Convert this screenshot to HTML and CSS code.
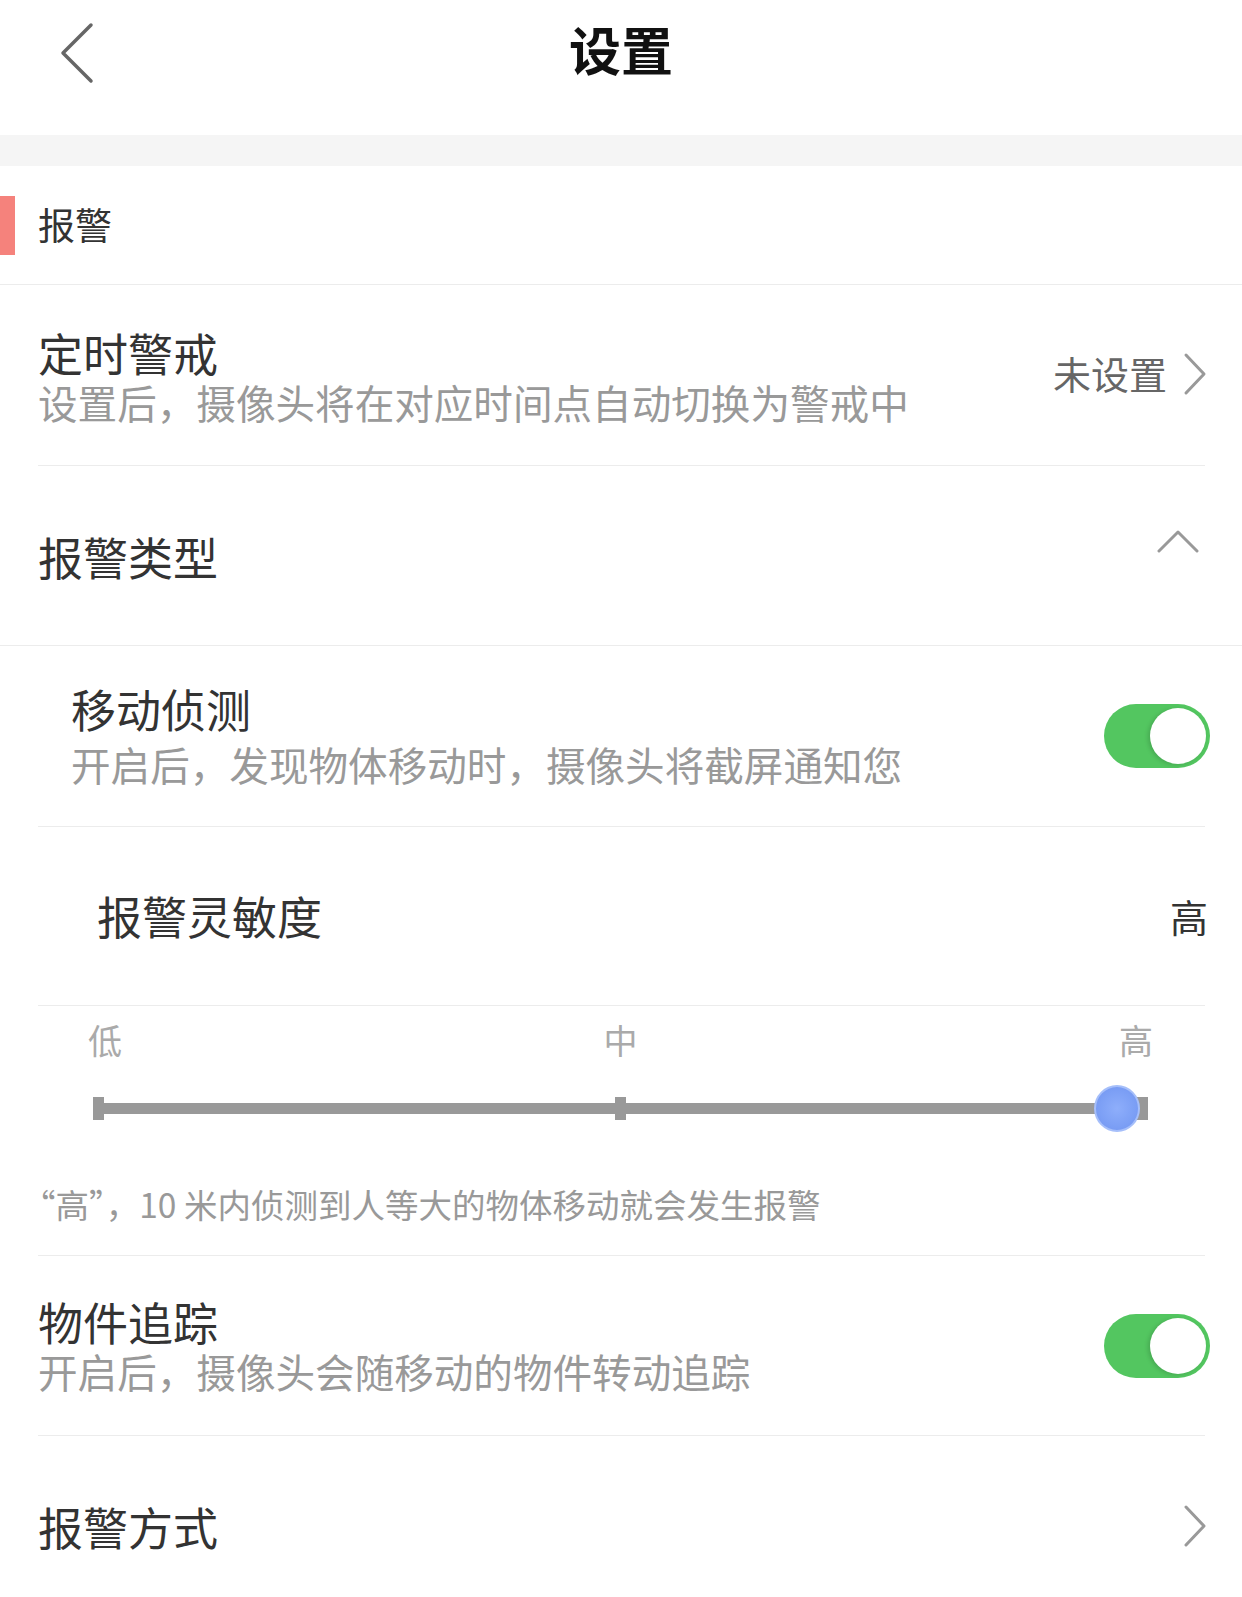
FILE: index.html
```html
<!DOCTYPE html>
<html lang="zh-CN">
<head>
<meta charset="utf-8">
<title>设置</title>
<link rel="stylesheet" href="styles.css">
</head>
<body>
<div class="page">
  <header class="header">
    <div class="header-row">
      <span class="back">
        <svg width="36" height="62" viewBox="0 0 36 62"><polyline points="32,3 4,31 32,59" fill="none" stroke="#666" stroke-width="3.5" stroke-linecap="round" stroke-linejoin="round"/></svg>
      </span>
      <h1 class="title">设置</h1>
      <span class="spacer"></span>
    </div>
  </header>
  <div class="band"></div>

  <div class="section-head">
    <span class="mark"></span>
    <span class="section-title">报警</span>
  </div>

  <div class="row-wrap">
    <div class="row row-a">
      <div class="texts">
        <div class="row-title">定时警戒</div>
        <div class="row-sub">设置后，摄像头将在对应时间点自动切换为警戒中</div>
      </div>
      <div class="value">未设置
        <svg class="chev" width="24" height="44" viewBox="0 0 24 44"><polyline points="3,3 21,22 3,41" fill="none" stroke="#999" stroke-width="3" stroke-linecap="round" stroke-linejoin="round"/></svg>
      </div>
    </div>
  </div>

  <div class="row-full">
    <div class="row row-b">
      <div class="row-title">报警类型</div>
      <svg class="up" width="42" height="24" viewBox="0 0 42 24"><polyline points="2,22 21,3 40,22" fill="none" stroke="#999" stroke-width="3" stroke-linecap="round" stroke-linejoin="round"/></svg>
    </div>
  </div>

  <div class="row-wrap">
    <div class="row row-c">
      <div class="texts indent1">
        <div class="row-title">移动侦测</div>
        <div class="row-sub sub-wide">开启后，发现物体移动时，摄像头将截屏通知您</div>
      </div>
      <span class="toggle"><span class="knob"></span></span>
    </div>
  </div>

  <div class="row-wrap">
    <div class="row row-d">
      <div class="row-title indent2">报警灵敏度</div>
      <div class="level">高</div>
    </div>
  </div>

  <div class="row-wrap">
    <div class="slider-block">
      <div class="labels">
        <span>低</span><span>中</span><span>高</span>
      </div>
      <div class="track">
        <span class="tick tick-l"></span>
        <span class="tick tick-m"></span>
        <span class="tick tick-r"></span>
        <span class="thumb"></span>
      </div>
      <div class="desc">“高”，10 米内侦测到人等大的物体移动就会发生报警</div>
    </div>
  </div>

  <div class="row-wrap">
    <div class="row row-e">
      <div class="texts">
        <div class="row-title">物件追踪</div>
        <div class="row-sub">开启后，摄像头会随移动的物件转动追踪</div>
      </div>
      <span class="toggle"><span class="knob"></span></span>
    </div>
  </div>

  <div class="row-wrap last">
    <div class="row row-f">
      <div class="row-title">报警方式</div>
      <svg class="chev" width="24" height="44" viewBox="0 0 24 44"><polyline points="3,3 21,22 3,41" fill="none" stroke="#999" stroke-width="3" stroke-linecap="round" stroke-linejoin="round"/></svg>
    </div>
  </div>
</div>
</body>
</html>
```
FILE: styles.css
```css
* { box-sizing: border-box; }
html, body { margin: 0; padding: 0; background: #fff; }
body {
  font-family: "Noto Sans CJK SC", "Noto Sans", sans-serif;
  color: #333;
  width: 1242px;
  overflow: hidden;
}
.page { width: 1242px; }

.header { height: 135px; }
.header-row {
  height: 98px;
  display: grid;
  grid-template-columns: 200px 1fr 200px;
  align-items: center;
}
.back { display: flex; align-items: center; padding-left: 59px; padding-top: 8px; }
.title {
  margin: 0;
  text-align: center;
  font-size: 52px;
  font-weight: 700;
  color: #111;
  line-height: 1;
}
.band { height: 31px; background: #f5f5f5; }

.section-head {
  height: 119px;
  display: flex;
  align-items: center;
  border-bottom: 1px solid #ececec;
}
.mark { width: 15px; height: 59px; background: #f5827c; }
.section-title { margin-left: 23px; font-size: 37px; color: #333; line-height: 1; padding-bottom: 2px; }

.row-wrap { padding: 0 37px 0 38px; }
.row-full { padding: 0 37px 0 38px; border-bottom: 1px solid #ececec; }
.row {
  display: flex;
  align-items: center;
  justify-content: space-between;
  border-bottom: 1px solid #ececec;
}
.row-full .row { border-bottom: none; }
.last .row { border-bottom: none; }

.row-title { font-size: 45px; line-height: 50px; color: #333; }
.row-sub { font-size: 39.6px; line-height: 48px; color: #999; white-space: nowrap; }
.sub-wide { margin-top: 6px; }

.row-a { height: 181px; padding-top: 4px; }
.row-b { height: 179px; padding-top: 2px; }
.row-c { height: 181px; }
.row-d { height: 179px; }
.row-e { height: 180px; }
.row-f { height: 180px; padding-top: 2px; }

.value {
  display: flex;
  align-items: center;
  font-size: 38px;
  color: #666;
  line-height: 1;
  margin-top: -8px;
}
.value .chev { margin-left: 16px; margin-right: -2px; margin-top: 2px; }
.up { margin-top: -32px; margin-right: 6px; }
.row-f .chev { margin-right: -2px; margin-top: -2px; }

.indent1 { padding-left: 33px; }
.indent2 { padding-left: 59px; }
.level { font-size: 38px; color: #333; line-height: 1; margin-right: -3px; }

.toggle {
  width: 106px;
  height: 64px;
  border-radius: 32px;
  background: #53c660;
  position: relative;
  flex: none;
  margin-right: -5px;
}
.knob {
  position: absolute;
  right: 4px;
  top: 4px;
  width: 56px;
  height: 56px;
  border-radius: 50%;
  background: #fff;
  box-shadow: -2px 1px 4px rgba(0,0,0,0.15);
}

.slider-block {
  height: 250px;
  border-bottom: 1px solid #ececec;
  padding-top: 10px;
}
.labels {
  display: flex;
  justify-content: space-between;
  padding: 0 52px 0 50px;
  font-size: 34px;
  line-height: 48px;
  color: #aaa;
}
.track {
  position: relative;
  margin: 39px 57px 0 55px;
  height: 11px;
  background: #999;
}
.tick {
  position: absolute;
  top: -6px;
  width: 11px;
  height: 23px;
  background: #999;
}
.tick-l { left: 0; }
.tick-m { left: 522px; }
.tick-r { right: 0; }
.thumb {
  position: absolute;
  left: 1001px;
  top: -18px;
  width: 46px;
  height: 47px;
  border-radius: 50%;
  background: radial-gradient(circle at 50% 50%, #8eaefb 0%, #7c9ff5 60%, #6f93f0 100%);
  border: 2px solid #a6bffa;
}
.desc {
  margin-top: 68px;
  margin-left: -16px;
  font-size: 33.5px;
  line-height: 44px;
  color: #999;
  white-space: nowrap;
}
```
